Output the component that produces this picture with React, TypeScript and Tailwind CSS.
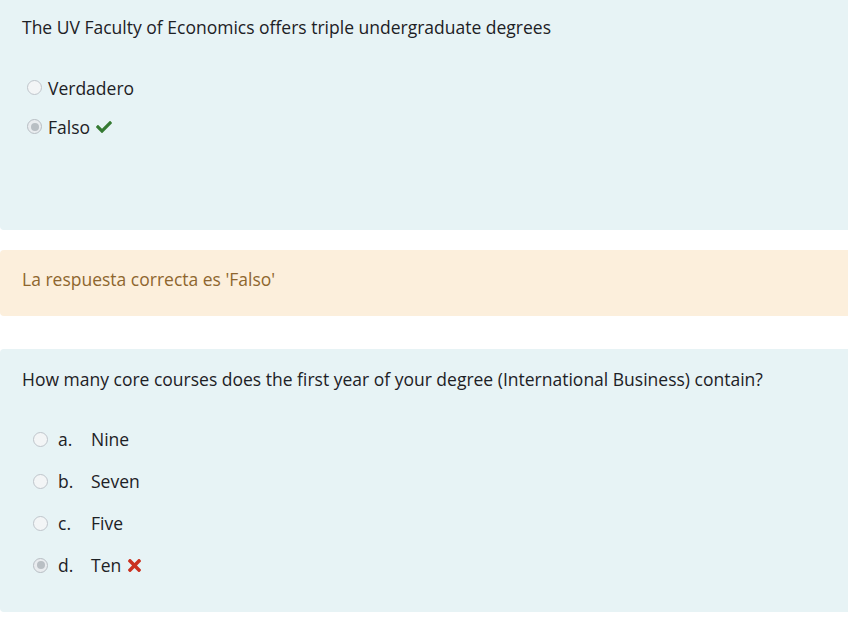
import React from "react";

const font = { fontFamily: '"Open Sans", "Noto Sans", sans-serif' };

const Radio = ({ checked }: { checked?: boolean }) => (
  <span
    className={`flex h-[15px] w-[15px] shrink-0 items-center justify-center rounded-full border ${
      checked ? "border-[#b8bec4] bg-[#e9ecef]" : "border-[#bfc5cb] bg-[#f3f5f6]"
    }`}>
    {checked && <span className="h-[8px] w-[8px] rounded-full bg-[#b9bfc4]" />}
  </span>
);

const Check = () => (
  <svg viewBox="0 0 512 512" className="h-[16px] w-[18px] fill-[#357a32]">
    <path d="M173.898 439.404l-166.4-166.4c-9.997-9.997-9.997-26.206 0-36.204l36.203-36.204c9.997-9.998 26.207-9.998 36.204 0L192 312.69 432.095 72.596c9.997-9.997 26.207-9.997 36.204 0l36.203 36.204c9.997 9.997 9.997 26.206 0 36.204l-294.4 294.401c-9.998 9.997-26.207 9.997-36.204-.001z" />
  </svg>
);

const Cross = () => (
  <svg viewBox="0 0 352 512" className="h-[19px] w-[13px] fill-[#ca3120]">
    <path d="M242.72 256l100.07-100.07c12.28-12.28 12.28-32.19 0-44.48l-22.24-22.24c-12.28-12.28-32.19-12.28-44.48 0L176 189.28 75.93 89.21c-12.28-12.28-32.19-12.28-44.48 0L9.21 111.45c-12.28 12.28-12.28 32.19 0 44.48L109.28 256 9.21 356.07c-12.28 12.28-12.28 32.19 0 44.48l22.24 22.24c12.28 12.28 32.2 12.28 44.48 0L176 322.72l100.07 100.07c12.28 12.28 32.2 12.28 44.48 0l22.24-22.24c12.28-12.28 12.28-32.19 0-44.48L242.72 256z" />
  </svg>
);

const options = [
  { letter: "a.", text: "Nine" },
  { letter: "b.", text: "Seven" },
  { letter: "c.", text: "Five" },
  { letter: "d.", text: "Ten", chosen: true },
];

const App = () => {
  return (
    <div className="h-[619px] w-full overflow-hidden bg-white text-[17.5px] leading-[28px] text-[#1d2125]" style={font}>
      <div className="h-[230px] rounded-bl-[4px] bg-[#e7f3f5] pl-[22px] pt-[13px]">
        <p>The UV Faculty of Economics offers triple undergraduate degrees</p>
        <div className="mt-[27px]">
          <div className="flex h-[39px] items-center pl-[5px]">
            <Radio />
            <span className="ml-[6px]">Verdadero</span>
          </div>
          <div className="flex h-[39px] items-center pl-[5px]">
            <Radio checked />
            <span className="ml-[6px]">Falso</span>
            <span className="ml-[5px]">
              <Check />
            </span>
          </div>
        </div>
      </div>

      <div className="mt-[20px] flex h-[66px] items-center rounded-l-[4px] bg-[#fcefdc] pb-[8px] pl-[22px] text-[#8e662e]">
        La respuesta correcta es 'Falso'
      </div>

      <div className="mt-[33px] h-[263px] rounded-l-[4px] bg-[#e7f3f5] pl-[22px] pt-[16px]">
        <p>How many core courses does the first year of your degree (International Business) contain?</p>
        <div className="mt-[25px]">
          {options.map((o) => (
            <div key={o.letter} className="flex h-[42px] items-center pl-[11px]">
              <Radio checked={o.chosen} />
              <span className="ml-[10px] w-[33px]">{o.letter}</span>
              <span>{o.text}</span>
              {o.chosen && (
                <span className="ml-[7px]">
                  <Cross />
                </span>
              )}
            </div>
          ))}
        </div>
      </div>
    </div>
  );
};

export default App;
